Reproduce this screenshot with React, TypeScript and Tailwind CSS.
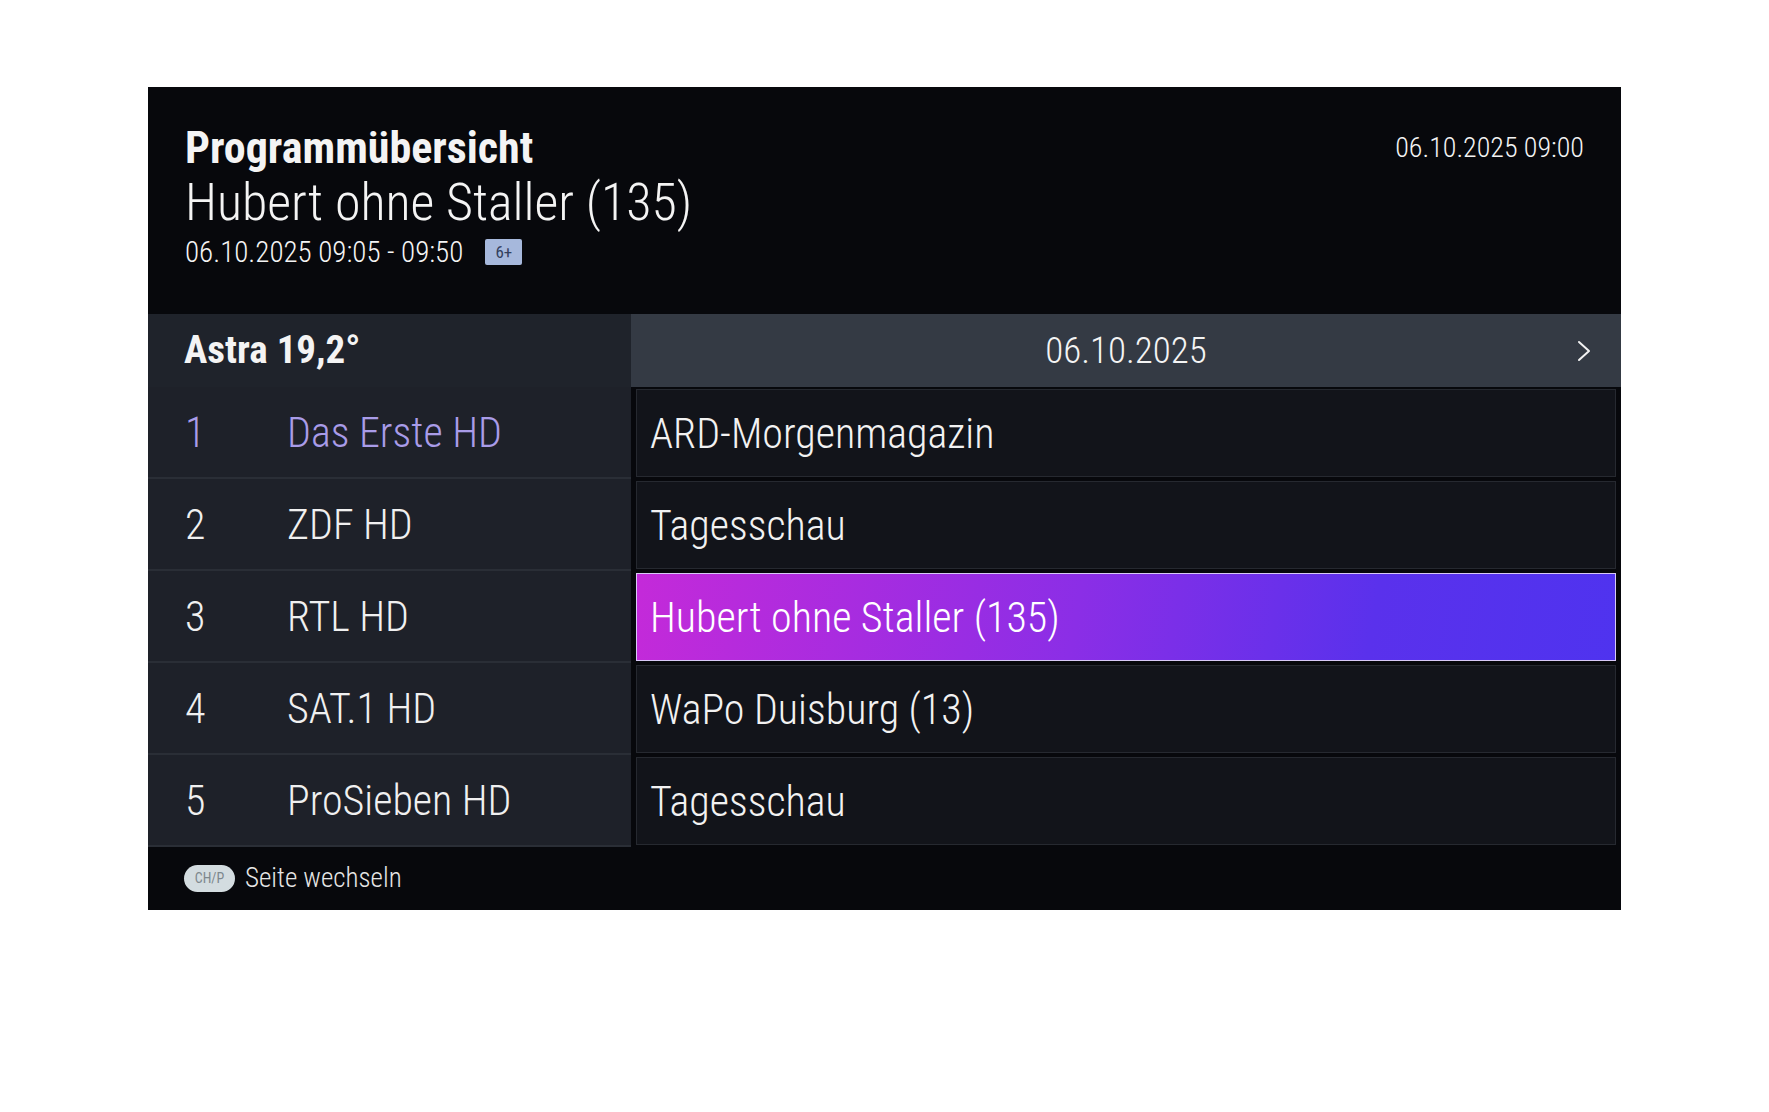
import React from "react";

const channels = [
  { n: "1", name: "Das Erste HD", prog: "ARD-Morgenmagazin" },
  { n: "2", name: "ZDF HD", prog: "Tagesschau" },
  { n: "3", name: "RTL HD", prog: "Hubert ohne Staller (135)" },
  { n: "4", name: "SAT.1 HD", prog: "WaPo Duisburg (13)" },
  { n: "5", name: "ProSieben HD", prog: "Tagesschau" },
];

function Chevron() {
  return (
    <svg width="14" height="22" viewBox="0 0 14 22" fill="none">
      <path d="M2 2 L12 11 L2 20" stroke="#f2f2f2" strokeWidth="2" strokeLinecap="round" strokeLinejoin="round" />
    </svg>
  );
}

export default function App() {
  return (
    <div className="min-h-screen bg-white pt-[87px] font-['Roboto_Condensed','Roboto',sans-serif]">
      <div className="mx-auto flex w-[1473px] flex-col bg-[#07080c] text-[#f4f4f4]">
        {/* header */}
        <div className="flex h-[227px] justify-between px-[37px]">
          <div className="flex flex-col pt-[37px]">
            <div className="text-[44px] font-bold leading-[48px]">Programmübersicht</div>
            <div className="mt-[3px] text-[52px] font-light leading-[56px]">Hubert ohne Staller (135)</div>
            <div className="mt-[5px] flex items-center gap-[22px]">
              <span className="text-[29px] font-light leading-[32px]">06.10.2025 09:05 - 09:50</span>
              <span className="flex h-[26px] w-[37px] items-center justify-center rounded-[2px] bg-[#a6b8dc] text-[17px] font-normal leading-none text-[#33405e]">6+</span>
            </div>
          </div>
          <div className="pt-[45px] text-[28px] font-light leading-[32px]">06.10.2025 09:00</div>
        </div>

        {/* column headers */}
        <div className="flex h-[73px]">
          <div className="flex w-[483px] items-center bg-[#1f232b] pl-[36px] text-[39px] font-bold">Astra 19,2°</div>
          <div className="grid flex-1 grid-cols-[1fr_auto_1fr] items-center bg-[#343a44] px-[30px]">
            <div />
            <div className="text-[37px] font-light">06.10.2025</div>
            <div className="justify-self-end"><Chevron /></div>
          </div>
        </div>

        {/* rows */}
        {channels.map((c, i) => {
          const active = i === 0;
          const sel = i === 2;
          return (
            <div key={i} className="flex h-[92px]">
              <div className={`flex w-[483px] items-center border-b-2 border-[#2a2e36] bg-[#1e2129] pl-[37px] text-[42px] font-light ${active ? "text-[#a99ce8]" : "text-[#f0f0f0]"}`}>
                <span className="w-[102px]">{c.n}</span>
                <span>{c.name}</span>
              </div>
              <div className="flex flex-1 px-[5px] py-[2px]">
                {sel ? (
                  <div className="flex flex-1 items-center border border-[#d8c9f6] bg-[linear-gradient(100deg,#c42ad9_0%,#8b2ee6_45%,#5a31ec_75%,#4f33ef_100%)] pl-[13px] text-[42px] font-light text-white">
                    {c.prog}
                  </div>
                ) : (
                  <div className="flex flex-1 items-center border border-[#262930] bg-[#12141a] pl-[13px] text-[42px] font-light text-[#f2f2f2]">
                    {c.prog}
                  </div>
                )}
              </div>
            </div>
          );
        })}

        {/* footer */}
        <div className="flex h-[63px] items-center gap-[10px] pl-[36px]">
          <span className="flex h-[27px] w-[51px] items-center justify-center rounded-full bg-[#d3dce0] text-[14px] font-normal text-[#7d878d]">CH/P</span>
          <span className="text-[27px] font-light text-[#e6e6e6]">Seite wechseln</span>
        </div>
      </div>
    </div>
  );
}
